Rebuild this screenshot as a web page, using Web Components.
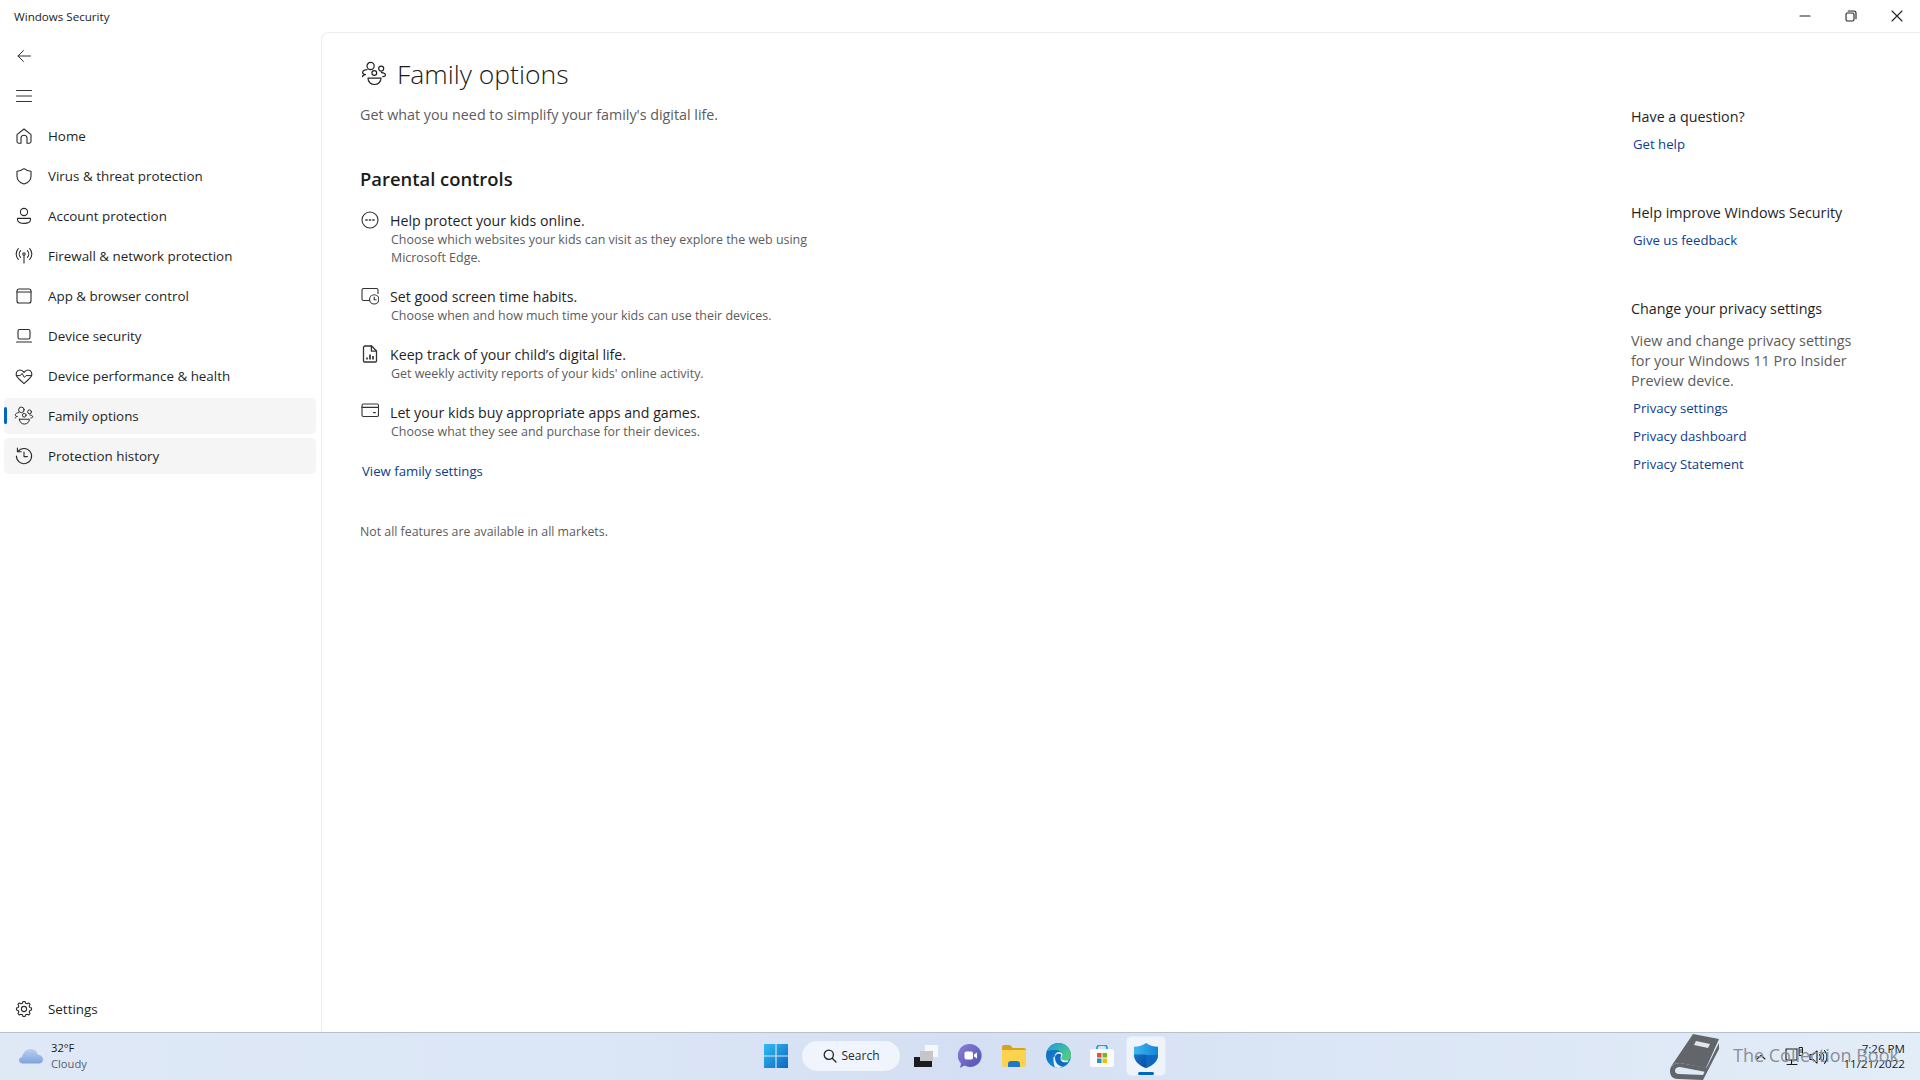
<!DOCTYPE html>
<html lang="en">
<head>
<meta charset="utf-8">
<title>Windows Security</title>
<style>
  html, body { margin: 0; height: 100%; overflow: hidden; background: #fff; }
  body { font-family: "Open Sans", "Noto Sans", "Liberation Sans", sans-serif; color: #1b1b1b; }
</style>
</head>
<body>
<security-window></security-window>
<script>
// gear outline, easier to generate than to write by hand
function gearPath(cx, cy, outer, inner, teeth) {
  let d = "";
  const step = (Math.PI * 2) / teeth;
  for (let i = 0; i < teeth; i++) {
    const a = i * step - Math.PI / 2;
    const pts = [
      [outer, a - step * 0.17],
      [outer, a + step * 0.17],
      [inner, a + step * 0.33],
      [inner, a + step * 0.67]
    ];
    pts.forEach(([r, t], j) => {
      const x = (cx + r * Math.cos(t)).toFixed(2);
      const y = (cy + r * Math.sin(t)).toFixed(2);
      d += (i === 0 && j === 0 ? "M" : "L") + x + " " + y + " ";
    });
  }
  return d + "Z";
}

const line = (w, body, vb = "0 0 20 20", h = w, sw = 1.1) =>
  `<svg width="${w}" height="${h}" viewBox="${vb}" fill="none" stroke="currentColor" stroke-width="${sw}" stroke-linecap="round" stroke-linejoin="round">${body}</svg>`;

const FAMILY = `<circle cx="9.6" cy="5" r="3.6"/><circle cx="13.3" cy="12" r="2.4"/><circle cx="20.2" cy="7.6" r="2.5"/>
  <path d="M6 8.6C3.6 8.8 1.6 10 1.6 11.6c0 1.3 1.4 1.9 2.9 2.1-1.5.2-2.9 1-3 1.9M20.4 11.6c2.3.2 4 1 4 2.3 0 1-1.2 1.6-2.6 1.7"/>
  <path d="M7 17.2h13c0 3.6-2.8 6.3-6.5 6.3S7 20.8 7 17.2Z"/>`;

const ICONS = {
  back: line(20, `<path d="M16.5 10H4M9.5 4.5 4 10l5.5 5.5"/>`, "0 0 20 20", 20, 1),
  menu: line(20, `<path d="M2.5 4.5h15M2.5 10h15M2.5 15.5h15"/>`, "0 0 20 20", 20, 1),
  home: line(20, `<path d="M3 8.6 10 3l7 5.6v7a1.6 1.6 0 0 1-1.6 1.6H13v-5a3 3 0 0 0-6 0v5H4.6A1.6 1.6 0 0 1 3 15.6Z"/>`),
  shield: line(20, `<path d="M10 2.6c2.3 1.8 4.4 2.6 7 2.7v4.9c0 3.6-2.3 6.2-7 7.9-4.7-1.7-7-4.3-7-7.9V5.3c2.6-.1 4.7-.9 7-2.7Z"/>`),
  account: line(20, `<circle cx="10" cy="6" r="3.6"/><path d="M3.5 12.4h13v1.4c0 2.2-2.9 3.6-6.5 3.6s-6.5-1.4-6.5-3.6Z"/>`),
  firewall: line(20, `<circle cx="10" cy="8" r="1.2"/><path d="M10 9.2V17M6.6 4.6a5 5 0 0 0 0 6.8M13.4 4.6a5 5 0 0 1 0 6.8M4.3 2.6a8 8 0 0 0 0 10.8M15.7 2.6a8 8 0 0 1 0 10.8"/>`),
  app: line(20, `<rect x="3" y="3" width="14" height="14" rx="2"/><path d="M3 6h14"/>`),
  laptop: line(20, `<rect x="4" y="3.5" width="12" height="9.5" rx="1.6"/><path d="M2.5 16h15"/>`),
  health: line(20, `<path d="M5 13 3 10.6C1.2 8.2 2.4 4 6 4c1.8 0 3 1 4 2.4C11 5 12.2 4 14 4c3.6 0 4.8 4.2 3 6.6L15 13l-5 4.6Z"/><path d="M2.5 9.6h3.8L8 7.4l2.4 4 1.6-1.8h5.5" stroke-width="1"/>`),
  family: line(20, FAMILY, "0 0 26 26", 20, 1.3),
  history: line(20, `<path d="M4 5.4A7.6 7.6 0 1 1 2.4 10M3.4 2v3.8h3.8M10 6v4.6h3.4"/>`),
  settings: line(20, `<path d="${gearPath(10, 10, 7.6, 6, 8)}"/><circle cx="10" cy="10" r="2.6"/>`),
  pageFamily: line(26, FAMILY, "0 0 26 26", 26, 1.2),
  filter: line(18, `<circle cx="9" cy="9" r="8"/><path d="M4.8 9h1.4M8.3 9h1.4M11.8 9h1.4" stroke-width="1.3"/>`, "0 0 18 18"),
  screen: line(18, `<path d="M9.2 13.5H2.6A1.6 1.6 0 0 1 1 11.9V3.1a1.6 1.6 0 0 1 1.6-1.6h12.8A1.6 1.6 0 0 1 17 3.1v3.4"/><circle cx="13.2" cy="12.4" r="4.6" fill="#fff"/><path d="M13.2 10v2.7h2"/>`, "0 0 18 18"),
  report: line(18, `<path d="M4 1h6.6L15.5 6v10a1 1 0 0 1-1 1H3.5a1 1 0 0 1-1-1V2.5A1.5 1.5 0 0 1 4 1Z"/><path d="M10.4 1v5.2h5"/><path d="M6 14.6v-2M9 14.6V9.6M12 14.6v-3.6" stroke-width="1.7" stroke-linecap="butt"/>`, "0 0 18 18", 18, 1.3),
  card: line(18, `<rect x="1" y="1" width="16.5" height="12.5" rx="1.6"/><path d="M1 4.4h16.5M12.4 9.6h2" stroke-width="1.2"/>`, "0 0 18 18"),
  minimize: line(12, `<path d="M1 6h10"/>`, "0 0 12 12"),
  restore: line(12, `<rect x="1" y="3" width="8" height="8" rx="1.4"/><path d="M3.2 1h5.6A2.2 2.2 0 0 1 11 3.2v5.6"/>`, "0 0 12 12"),
  close: line(12, `<path d="M1 1l10 10M11 1 1 11"/>`, "0 0 12 12"),
  chevron: line(12, `<path d="M2 8l4-3.6L10 8"/>`, "0 0 12 12"),
  monitor: line(22, `<path d="M3 3h11v11H3zM8.5 14v4M4 18.5h10"/><path d="M16.5 1.5h3v8h-3z" stroke-width="1"/><path d="M17 4h2M17 6h2" stroke-width=".8"/>`, "0 0 22 22"),
  volume: line(22, `<path d="M3 8.5h3l4-3.5v12l-4-3.5H3Z"/><path d="M12.5 8.5a4 4 0 0 1 0 5M15 6.5a7 7 0 0 1 0 9M17.5 4.5a10 10 0 0 1 0 13"/>`, "0 0 22 22")
};

class NavItem extends HTMLElement {
  static get tag() {
    return "nav-item";
  }
  constructor() {
    super();
    this.attachShadow({ mode: "open" });
  }
  connectedCallback() {
    this.shadowRoot.innerHTML = `
    <style>
    :host {
      display: flex;
      align-items: center;
      gap: 14px;
      height: 36px;
      margin: 0 4px 4px;
      padding-left: 10px;
      border-radius: 5px;
      font-size: 13.4px;
      color: #1f1f1f;
      position: relative;
    }
    :host([hot]) { background: #f5f5f5; }
    :host([active])::before {
      content: "";
      position: absolute;
      left: 0;
      top: 9px;
      width: 3px;
      height: 17px;
      border-radius: 2px;
      background: #0067c0;
    }
    .ico { display: flex; width: 20px; height: 20px; color: #2b2b2b; }
    </style>
    <span class="ico">${ICONS[this.getAttribute("icon")]}</span>
    <slot></slot>`;
  }
}
customElements.define(NavItem.tag, NavItem);

class NavRail extends HTMLElement {
  static get tag() {
    return "nav-rail";
  }
  constructor() {
    super();
    this.attachShadow({ mode: "open" });
    this.shadowRoot.innerHTML = `
    <style>
    :host {
      display: flex;
      flex-direction: column;
      width: 320px;
      flex: none;
      box-sizing: border-box;
      padding-top: 4px;
      padding-bottom: 1px;
    }
    .btn { display: flex; align-items: center; height: 40px; padding-left: 14px; color: #333; }
    .btn + .btn { margin-bottom: 2px; }
    .spacer { flex: 1; }
    </style>
    <div class="btn">${ICONS.back}</div>
    <div class="btn">${ICONS.menu}</div>
    <slot></slot>
    <div class="spacer"></div>
    <slot name="foot"></slot>`;
  }
}
customElements.define(NavRail.tag, NavRail);

class ControlItem extends HTMLElement {
  static get tag() {
    return "control-item";
  }
  constructor() {
    super();
    this.attachShadow({ mode: "open" });
  }
  connectedCallback() {
    this.shadowRoot.innerHTML = `
    <style>
    :host {
      display: grid;
      grid-template-columns: 18px 1fr;
      column-gap: 11px;
      margin-left: 1px;
      margin-top: 20px;
      width: 470px;
    }
    .ico { color: #333; height: 18px; }
    .title { font-size: 14.2px; line-height: 20px; color: #1f1f1f; }
    .desc { font-size: 12.44px; line-height: 18px; color: #5c5c5c; padding-left: 1px; }
    </style>
    <span class="ico">${ICONS[this.getAttribute("icon")]}</span>
    <div class="title">${this.getAttribute("heading")}</div>
    <span></span>
    <div class="desc"><slot></slot></div>`;
  }
}
customElements.define(ControlItem.tag, ControlItem);

class LinkText extends HTMLElement {
  static get tag() {
    return "link-text";
  }
  constructor() {
    super();
    this.attachShadow({ mode: "open" });
    this.shadowRoot.innerHTML = `
    <style>
    :host {
      display: block;
      font-size: 13.2px;
      line-height: 20px;
      color: #0a3d8f;
      margin-left: 2px;
    }
    </style><slot></slot>`;
  }
}
customElements.define(LinkText.tag, LinkText);

class FamilyPage extends HTMLElement {
  static get tag() {
    return "family-page";
  }
  constructor() {
    super();
    this.attachShadow({ mode: "open" });
    this.shadowRoot.innerHTML = `
    <style>
    :host { display: block; padding: 21px 0 0 38px; width: 640px; }
    .head { display: flex; align-items: center; gap: 10px; height: 40px; margin-left: 1px; }
    .head span { display: flex; color: #222; }
    h1 { margin: 0; font-size: 26.5px; font-weight: 300; line-height: 40px; color: #1b1b1b; }
    .sub { margin-top: 11px; font-size: 14.3px; line-height: 20px; color: #5c5c5c; }
    h2 { margin: 40px 0 -2px; font-size: 18.4px; font-weight: 600; line-height: 28px; color: #1b1b1b; }
    .note { margin-top: 41px; font-size: 12.35px; line-height: 20px; color: #5c5c5c; }
    .view { margin-top: 20px; }
    </style>
    <div class="head"><span>${ICONS.pageFamily}</span><h1>Family options</h1></div>
    <div class="sub">Get what you need to simplify your family's digital life.</div>
    <h2>Parental controls</h2>
    <control-item icon="filter" heading="Help protect your kids online.">Choose which websites your kids can visit as they explore the web using Microsoft Edge.</control-item>
    <control-item icon="screen" heading="Set good screen time habits.">Choose when and how much time your kids can use their devices.</control-item>
    <control-item icon="report" heading="Keep track of your child’s digital life.">Get weekly activity reports of your kids' online activity.</control-item>
    <control-item icon="card" heading="Let your kids buy appropriate apps and games.">Choose what they see and purchase for their devices.</control-item>
    <div class="view"><link-text>View family settings</link-text></div>
    <div class="note">Not all features are available in all markets.</div>`;
  }
}
customElements.define(FamilyPage.tag, FamilyPage);

class HelpSection extends HTMLElement {
  static get tag() {
    return "help-section";
  }
  constructor() {
    super();
    this.attachShadow({ mode: "open" });
  }
  connectedCallback() {
    this.shadowRoot.innerHTML = `
    <style>
    :host { display: block; margin-bottom: 48px; }
    .t { font-size: 14.3px; line-height: 22px; margin-bottom: -2px; color: #1f1f1f; }
    ::slotted(link-text) { margin-top: 8px; }
    ::slotted(p) { margin: 13px 0 -1px; font-size: 14.4px; line-height: 20px; color: #5c5c5c; }
    </style>
    <div class="t">${this.getAttribute("heading")}</div>
    <slot></slot>`;
  }
}
customElements.define(HelpSection.tag, HelpSection);

class HelpPanel extends HTMLElement {
  static get tag() {
    return "help-panel";
  }
  constructor() {
    super();
    this.attachShadow({ mode: "open" });
    this.shadowRoot.innerHTML = `
    <style>
    :host { display: block; width: 289px; flex: none; padding-top: 73px; margin-left: -1px; }
    </style>
    <help-section heading="Have a question?"><link-text>Get help</link-text></help-section>
    <help-section heading="Help improve Windows Security"><link-text>Give us feedback</link-text></help-section>
    <help-section heading="Change your privacy settings">
      <p>View and change privacy settings<br>for your Windows 11 Pro Insider<br>Preview device.</p>
      <link-text>Privacy settings</link-text>
      <link-text>Privacy dashboard</link-text>
      <link-text>Privacy Statement</link-text>
    </help-section>`;
  }
}
customElements.define(HelpPanel.tag, HelpPanel);

class TitleBar extends HTMLElement {
  static get tag() {
    return "title-bar";
  }
  constructor() {
    super();
    this.attachShadow({ mode: "open" });
    this.shadowRoot.innerHTML = `
    <style>
    :host {
      display: flex;
      align-items: center;
      justify-content: space-between;
      height: 32px;
      flex: none;
      padding-left: 14px;
      font-size: 11.6px;
      color: #1b1b1b;
    }
    .ctl { display: flex; color: #222; }
    .ctl span { display: flex; align-items: center; justify-content: center; width: 46px; height: 32px; }
    </style>
    <span>Windows Security</span>
    <div class="ctl"><span>${ICONS.minimize}</span><span>${ICONS.restore}</span><span>${ICONS.close}</span></div>`;
  }
}
customElements.define(TitleBar.tag, TitleBar);

class TaskBar extends HTMLElement {
  static get tag() {
    return "task-bar";
  }
  constructor() {
    super();
    this.attachShadow({ mode: "open" });
    this.shadowRoot.innerHTML = `
    <style>
    :host {
      display: grid;
      grid-template-columns: 756px auto 1fr;
      align-items: center;
      height: 48px;
      flex: none;
      box-sizing: border-box;
      border-top: 1px solid #b8c0cb;
      background: linear-gradient(90deg, #dfe9f6 0%, #dbe6f6 30%, #d5dff3 50%, #d9e4f5 65%, #e3edf8 100%);
      position: relative;
      overflow: hidden;
    }
    .weather { display: flex; align-items: center; gap: 8px; padding-left: 19px; padding-bottom: 2px; font-size: 11.2px; line-height: 16px; }
    .weather small { display: block; font-size: inherit; color: #55606e; }
    .apps { display: flex; align-items: center; gap: 4px; height: 47px; padding-bottom: 2px; box-sizing: border-box; }
    .slot { display: flex; align-items: center; justify-content: center; width: 40px; height: 38px; position: relative; }
    .search {
      display: flex;
      align-items: center;
      justify-content: center;
      gap: 5px;
      width: 98px;
      height: 30px;
      margin: 0 2px;
      border-radius: 15px;
      background: #f0f4fc;
      font-size: 12px;
      color: #2a2a2a;
    }
    .search svg { color: #222; }
    .tile { width: 38px; margin: 0 1px; background: rgba(255,255,255,.6); border-radius: 4px; box-shadow: 0 0 0 1px rgba(255,255,255,.3); }
    .tile::after {
      content: "";
      position: absolute;
      left: 11px;
      bottom: 0;
      width: 16px;
      height: 3px;
      border-radius: 2px;
      background: #0067c0;
    }
    .tray { display: flex; align-items: center; justify-content: flex-end; padding-right: 15px; color: #1b1b1b; }
    .tray span { display: flex; }
    .chev { margin-right: 16px; }
    .mon { margin-right: 2px; }
    .clock { margin-left: 4px; width: 72px; text-align: right; font-size: 11.6px; line-height: 15px; padding-bottom: 2px; }
    .mark {
      position: absolute;
      left: 1670px;
      top: 0;
      display: flex;
      align-items: center;
      gap: 13px;
      height: 47px;
      font-size: 18px;
      color: #8a8f96;
      white-space: nowrap;
    }
    .mark span { padding-bottom: 4px; }
    .mark svg { flex: none; }
    </style>
    <div class="weather">
      <svg width="24" height="16" viewBox="0 0 24 16">
        <defs><linearGradient id="cl" x1="0" y1="0" x2="0" y2="1"><stop offset="0" stop-color="#b9cff0"/><stop offset="1" stop-color="#7ea3dc"/></linearGradient></defs>
        <path fill="url(#cl)" d="M4 15.5c-2.2 0-4-1.4-4-3.4 0-1.8 1.3-3.1 3.2-3.4C4 4.6 7.2 1 11.5 1c3.6 0 6.4 2.2 7.3 5.4 2.8.2 5.2 2 5.2 5 0 2.4-1.9 4.1-4.4 4.1Z"/>
      </svg>
      <div>32°F<small>Cloudy</small></div>
    </div>
    <div class="apps">
      <div class="slot">
        <svg width="24" height="24" viewBox="0 0 24 24">
          <defs><linearGradient id="wn" x1="0" y1="0" x2="1" y2="1"><stop offset="0" stop-color="#33bdf2"/><stop offset="1" stop-color="#0a67c2"/></linearGradient></defs>
          <path fill="url(#wn)" d="M0 0h11.4v11.4H0zM12.6 0H24v11.4H12.6zM0 12.6h11.4V24H0zM12.6 12.6H24V24H12.6z"/>
        </svg>
      </div>
      <div class="search">
        <svg width="14" height="14" viewBox="0 0 14 14" fill="none" stroke="currentColor" stroke-width="1.3" stroke-linecap="round"><circle cx="5.8" cy="5.8" r="4.6"/><path d="M9.2 9.2 13 13"/></svg>
        <span>Search</span>
      </div>
      <div class="slot">
        <svg width="24" height="22" viewBox="0 0 24 22">
          <rect x="11" y="0" width="13" height="12" fill="#f6f7fa"/>
          <rect x="6" y="6" width="13" height="10" fill="#c4c6ca"/>
          <path d="M0 12h6v4h12v6H0Z" fill="#1c1c1c"/>
        </svg>
      </div>
      <div class="slot">
        <svg width="24" height="26" viewBox="0 0 24 26">
          <defs><linearGradient id="ch" x1="0" y1="0" x2="1" y2="1"><stop offset="0" stop-color="#8c7fd6"/><stop offset="1" stop-color="#4f52b2"/></linearGradient></defs>
          <path fill="url(#ch)" d="M12 1a11.500 11.500 0 1 1-5.400 21.600L2 25l1-4.600A11.500 11.500 0 0 1 12 1Z"/>
          <rect x="6.500" y="8.500" width="8.500" height="8" rx="1.800" fill="#fff"/>
          <path d="M16 11.400 19 9.400v6l-3-2Z" fill="#fff"/>
        </svg>
      </div>
      <div class="slot">
        <svg width="24" height="22" viewBox="0 0 24 22">
          <path d="M0 2a2 2 0 0 1 2-2h6l3 3h11a2 2 0 0 1 2 2v3H0Z" fill="#d9a21b"/>
          <path d="M0 5h24v15a2 2 0 0 1-2 2H2a2 2 0 0 1-2-2Z" fill="#fcd34e"/>
          <path d="M6 22v-3a3 3 0 0 1 3-3h6a3 3 0 0 1 3 3v3Z" fill="#1d78c9"/>
        </svg>
      </div>
      <div class="slot">
        <svg width="25" height="25" viewBox="0 0 25 25">
          <defs>
            <linearGradient id="eb" x1="0" y1="0" x2="1" y2="1"><stop offset="0" stop-color="#0f62b6"/><stop offset="1" stop-color="#1b9de2"/></linearGradient>
            <linearGradient id="eg" x1="0" y1="0" x2="1" y2="1"><stop offset="0" stop-color="#1b9de2"/><stop offset="1" stop-color="#5fd46b"/></linearGradient>
          </defs>
          <circle cx="12.500" cy="12.500" r="12.500" fill="url(#eb)"/>
          <path d="M1 8C3 3 7.500 0 12.500 0 19.500 0 25 5.500 25 12c0 3.500-2.500 5.500-6 5.500-2.500 0-4.500-1-4.500-2.500 1-1 1.500-2 1.500-3 0-3-3-5-6-5C6 7 3 7.500 1 8Z" fill="url(#eg)"/>
          <path d="M8.500 14c0-3 2-5 4.500-5 2 0 3.500 1.500 3.500 3 0 1-.5 2-1.500 3 0 1.500 2 2.500 4.500 2.500 1 0 2-.2 3-.6-2 4.600-6 8-10.500 8-1.500 0-3-.4-3.500-.9 1-.1-1.500-2-1-10Z" fill="#fff" opacity=".88"/>
          <path d="M9 14.500c0 5 3 8.300 7.500 9.200 2.500-.6 4.500-2.500 6-5-3 1.300-8 1-8-3.700 0-2 1-3 1-3-2-2-6.500-1.500-6.500 2.500Z" fill="#0f6bc0"/>
        </svg>
      </div>
      <div class="slot">
        <svg width="24" height="22" viewBox="0 0 24 22">
          <path d="M7 5V3a3 3 0 0 1 3-3h4a3 3 0 0 1 3 3v2" fill="none" stroke="#2b9fe0" stroke-width="1.800"/>
          <rect x="0" y="4" width="24" height="18" rx="2" fill="#fbfbfb"/>
          <rect x="7" y="8" width="4.500" height="4.500" fill="#e8512a"/>
          <rect x="12.500" y="8" width="4.500" height="4.500" fill="#72b82e"/>
          <rect x="7" y="13.500" width="4.500" height="4.500" fill="#1f8fe0"/>
          <rect x="12.500" y="13.500" width="4.500" height="4.500" fill="#f6b90f"/>
        </svg>
      </div>
      <div class="slot tile">
        <svg width="24" height="25" viewBox="0 0 24 25">
          <defs>
            <linearGradient id="sa" x1="0" y1="0" x2="1" y2="0"><stop offset="0" stop-color="#3fb6ef"/><stop offset="1" stop-color="#1683d8"/></linearGradient>
            <linearGradient id="sb" x1="0" y1="0" x2="1" y2="1"><stop offset="0" stop-color="#1575cb"/><stop offset="1" stop-color="#0a4ea3"/></linearGradient>
          </defs>
          <path d="M12 0c3 2.300 7 3.500 12 3.800v8C24 18 19 22.500 12 25 5 22.500 0 18 0 11.800v-8C5 3.500 9 2.300 12 0Z" fill="url(#sa)"/>
          <path d="M0 11.500h12V25C5 22.500 0 18 0 11.800Z" fill="url(#sb)"/>
          <path d="M12 12h12c0 6-5 10.500-12 13Z" fill="#1068bf"/>
        </svg>
      </div>
    </div>
    <div class="tray">
      <span class="chev">${ICONS.chevron}</span>
      <span class="mon">${ICONS.monitor}</span>
      <span>${ICONS.volume}</span>
      <div class="clock">7:26 PM<br>11/21/2022</div>
    </div>
    <div class="mark">
      <svg width="50" height="47" viewBox="0 0 50 47">
        <path fill="#62666b" d="M23 1 49 6 36 35 10 30C5 30 2 32 0 35Z"/>
        <path fill="#62666b" d="M10 30C4 30 0 33 0 38c0 5 3 8 8 8l25 1L49 16v-6L33 42 9 41c-3 0-4-1.500-4-3.500S7 34 10 34l26 5 2-4Z"/>
        <path fill="#dfe6ee" d="M26 8 40 11 38 15 24 12Z"/>
      </svg>
      <span>The Collection Book</span>
    </div>`;
  }
}
customElements.define(TaskBar.tag, TaskBar);

class SecurityWindow extends HTMLElement {
  static get tag() {
    return "security-window";
  }
  constructor() {
    super();
    this.attachShadow({ mode: "open" });
    this.shadowRoot.innerHTML = `
    <style>
    :host { display: flex; flex-direction: column; width: 1920px; height: 1080px; background: #fff; }
    .body { display: flex; flex: 1; min-height: 0; }
    .panel {
      flex: 1;
      display: flex;
      justify-content: space-between;
      margin-left: 1px;
      box-sizing: border-box;
      border-top: 1px solid #ededed;
      border-left: 1px solid #ededed;
      border-top-left-radius: 8px;
    }
    </style>
    <title-bar></title-bar>
    <div class="body">
      <nav-rail>
        <nav-item icon="home">Home</nav-item>
        <nav-item icon="shield">Virus &amp; threat protection</nav-item>
        <nav-item icon="account">Account protection</nav-item>
        <nav-item icon="firewall">Firewall &amp; network protection</nav-item>
        <nav-item icon="app">App &amp; browser control</nav-item>
        <nav-item icon="laptop">Device security</nav-item>
        <nav-item icon="health">Device performance &amp; health</nav-item>
        <nav-item icon="family" hot active>Family options</nav-item>
        <nav-item icon="history" hot>Protection history</nav-item>
        <nav-item slot="foot" icon="settings">Settings</nav-item>
      </nav-rail>
      <div class="panel">
        <family-page></family-page>
        <help-panel></help-panel>
      </div>
    </div>
    <task-bar></task-bar>`;
  }
}
customElements.define(SecurityWindow.tag, SecurityWindow);
</script>
</body>
</html>
